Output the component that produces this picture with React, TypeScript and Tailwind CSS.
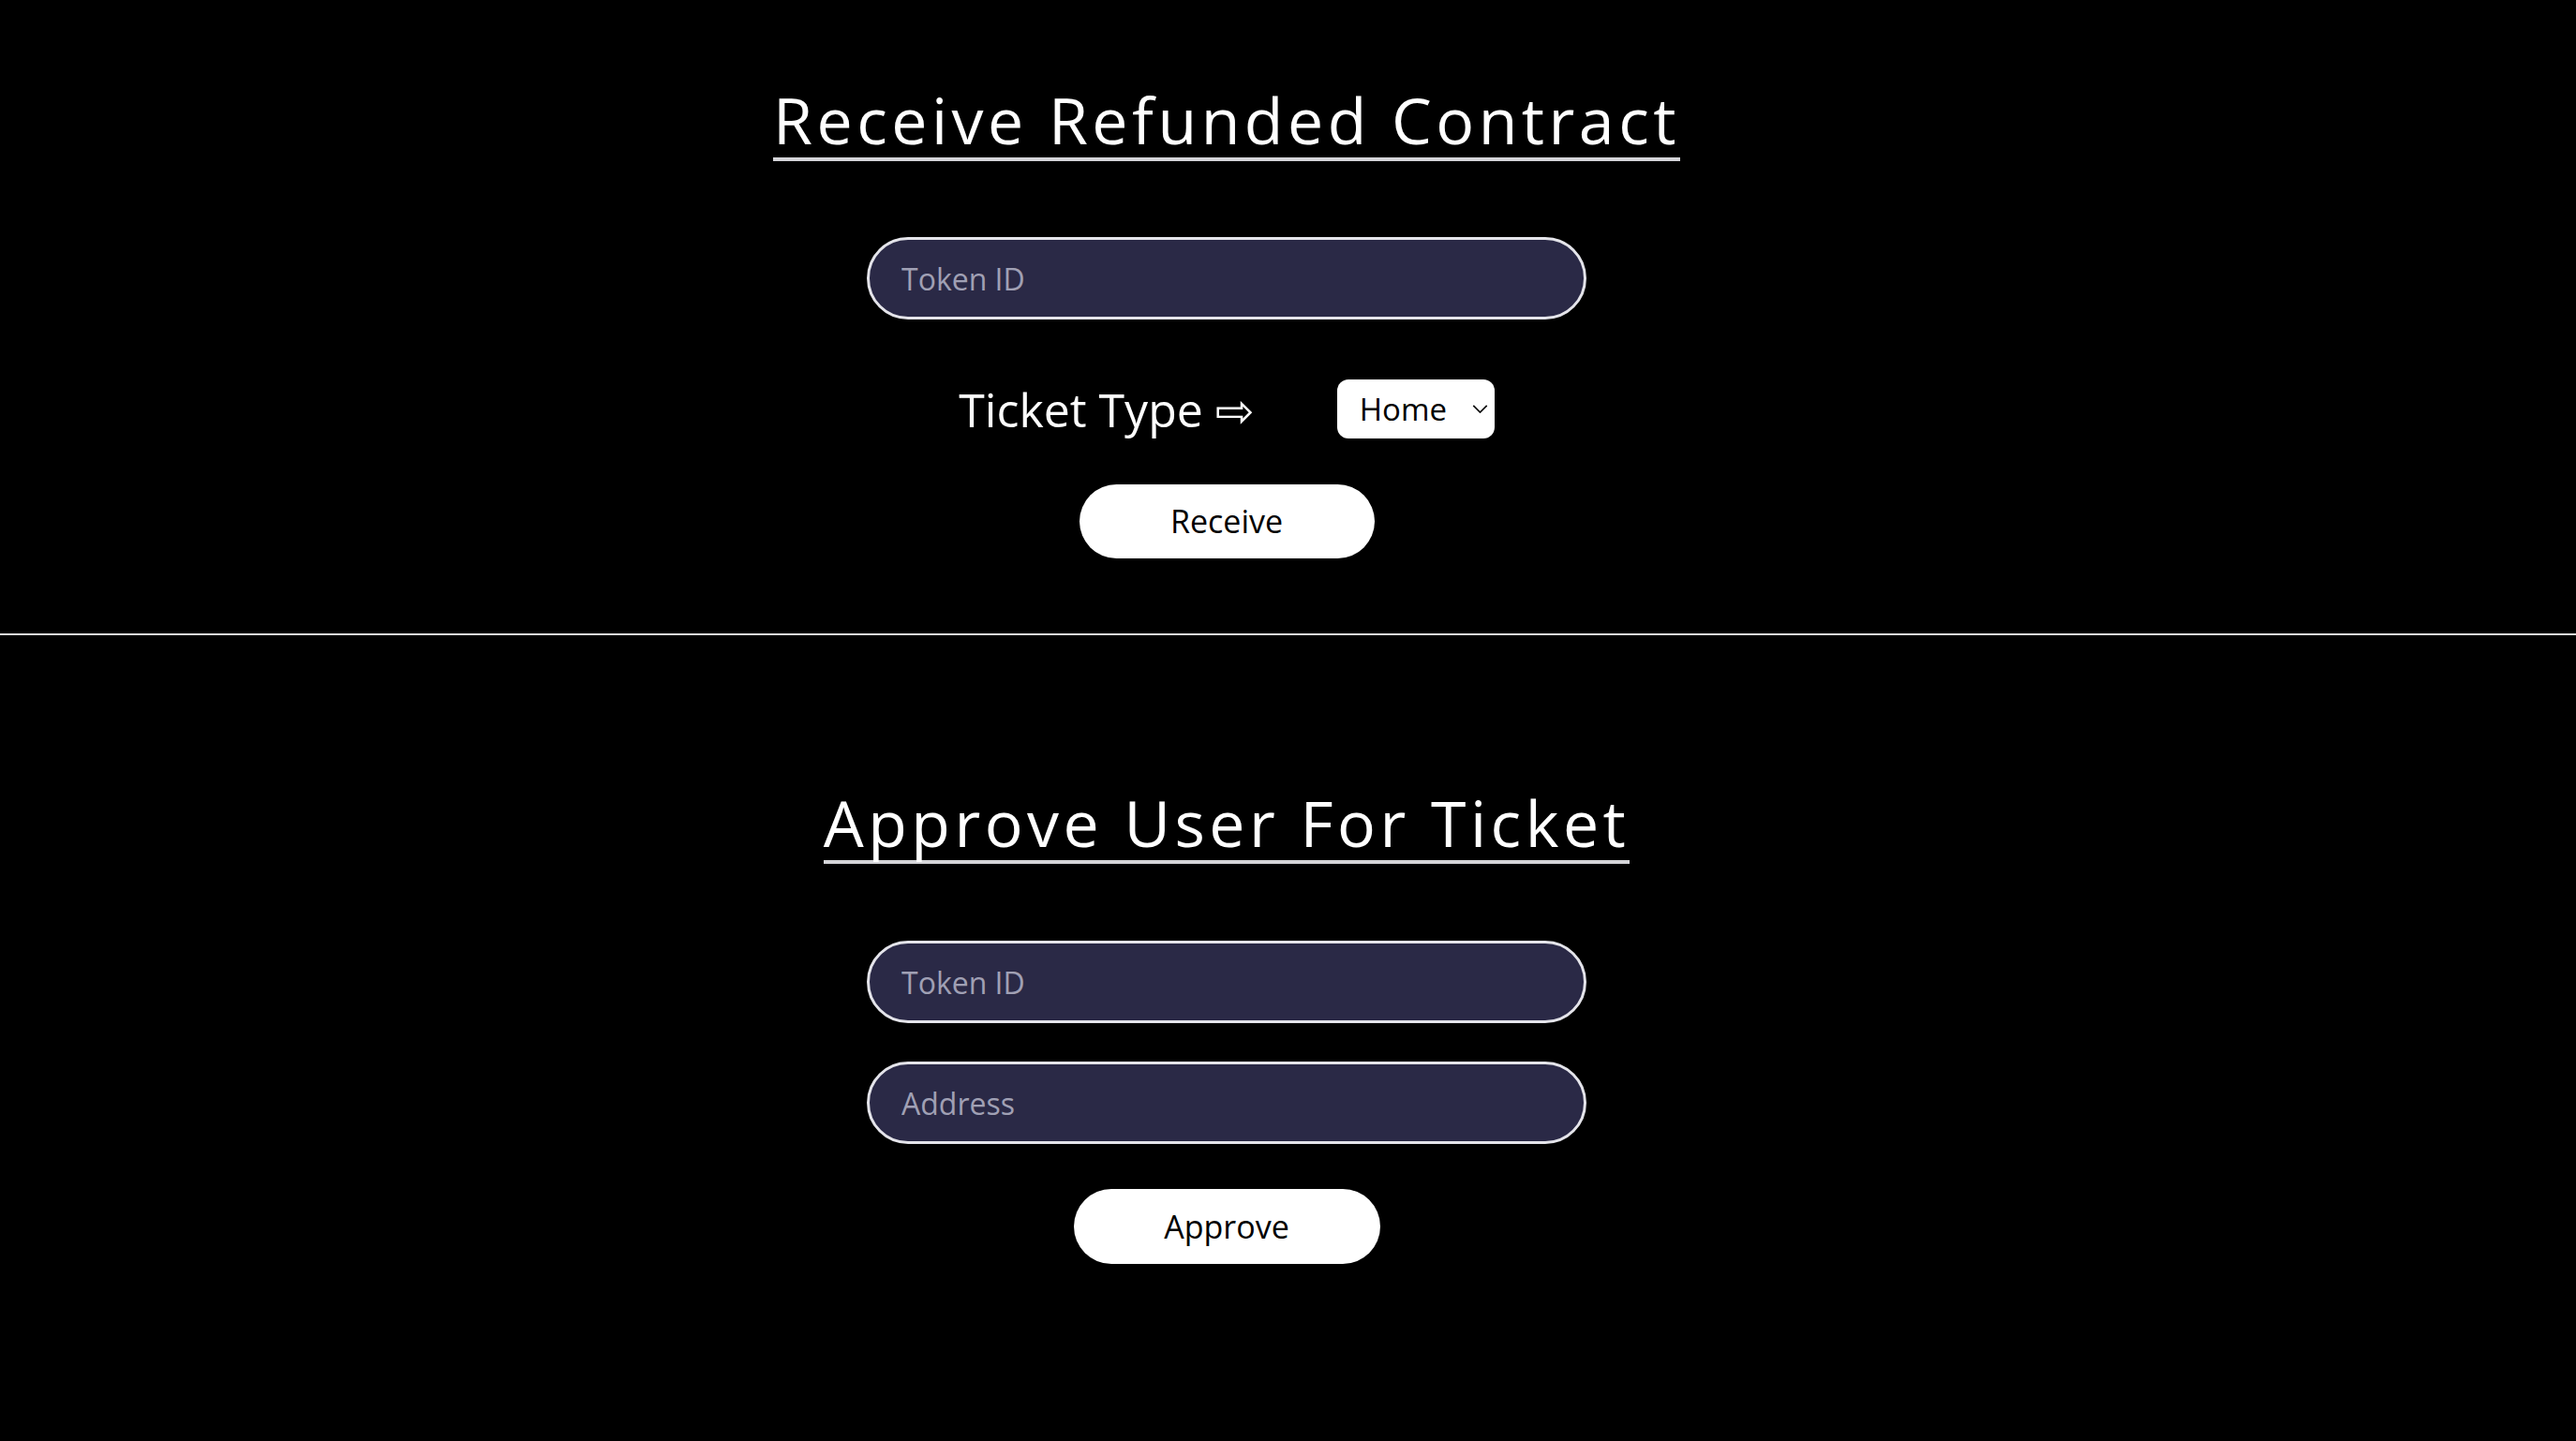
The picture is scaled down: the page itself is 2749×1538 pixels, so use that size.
import { useState } from "react";

const FONT = { fontFamily: '"Open Sans", "DejaVu Sans", sans-serif' };

function Title({ children }: { children: string }) {
  return (
    <h1 className="inline-block border-b-4 border-[#d4d4d8] pb-[6px] text-[68px] font-normal leading-none tracking-[4.5px] text-white">
      {children}
    </h1>
  );
}

function Field({ placeholder, value, onChange }: { placeholder: string; value: string; onChange: (v: string) => void }) {
  return (
    <input
      type="text"
      value={value}
      placeholder={placeholder}
      onChange={(e) => onChange(e.target.value)}
      className="h-[88px] w-[768px] rounded-full border-[3px] border-[#e4e4ea] bg-[#2a2946] px-[34px] text-[32px] text-white outline-none placeholder:text-[#a0a0b4]"
    />
  );
}

export default function App() {
  const [tokenId, setTokenId] = useState("");
  const [ticketType, setTicketType] = useState("home");
  const [approveToken, setApproveToken] = useState("");
  const [address, setAddress] = useState("");

  return (
    <div className="min-h-screen bg-black" style={FONT}>
      {/* Receive */}
      <section className="flex flex-col items-center pt-[94px] pr-[131px]">
        <Title>Receive Refunded Contract</Title>

        <div className="mt-[81px]">
          <Field placeholder="Token ID" value={tokenId} onChange={setTokenId} />
        </div>

        <div className="mt-[64px] flex items-center gap-[88px]">
          <span className="text-[50px] leading-none text-white">Ticket Type ⇨</span>
          <div className="relative">
            <select
              value={ticketType}
              onChange={(e) => setTicketType(e.target.value)}
              className="h-[63px] w-[168px] appearance-none rounded-xl bg-white pl-[24px] text-[33px] text-black outline-none"
            >
              <option value="home">Home</option>
              <option value="away">Away</option>
            </select>
            <svg
              className="pointer-events-none absolute right-[7px] top-[27px] h-[9px] w-[17px]"
              viewBox="0 0 18 10"
              fill="none"
              stroke="#000"
              strokeWidth={1.8}
            >
              <path d="M1 1l8 8 8-8" />
            </svg>
          </div>
        </div>

        <button className="mt-[49px] h-[79px] w-[315px] rounded-full bg-white text-[34px] text-black">
          Receive
        </button>
      </section>

      <div className="mt-[80px] h-[2px] w-full bg-[#d9d9d9]" />

      {/* Approve */}
      <section className="flex flex-col items-center pt-[166px] pb-[190px] pr-[131px]">
        <Title>Approve User For Ticket</Title>

        <div className="mt-[82px] flex flex-col gap-[41px]">
          <Field placeholder="Token ID" value={approveToken} onChange={setApproveToken} />
          <Field placeholder="Address" value={address} onChange={setAddress} />
        </div>

        <button className="mt-[48px] h-[80px] w-[327px] rounded-full bg-white text-[34px] text-black">
          Approve
        </button>
      </section>
    </div>
  );
}
